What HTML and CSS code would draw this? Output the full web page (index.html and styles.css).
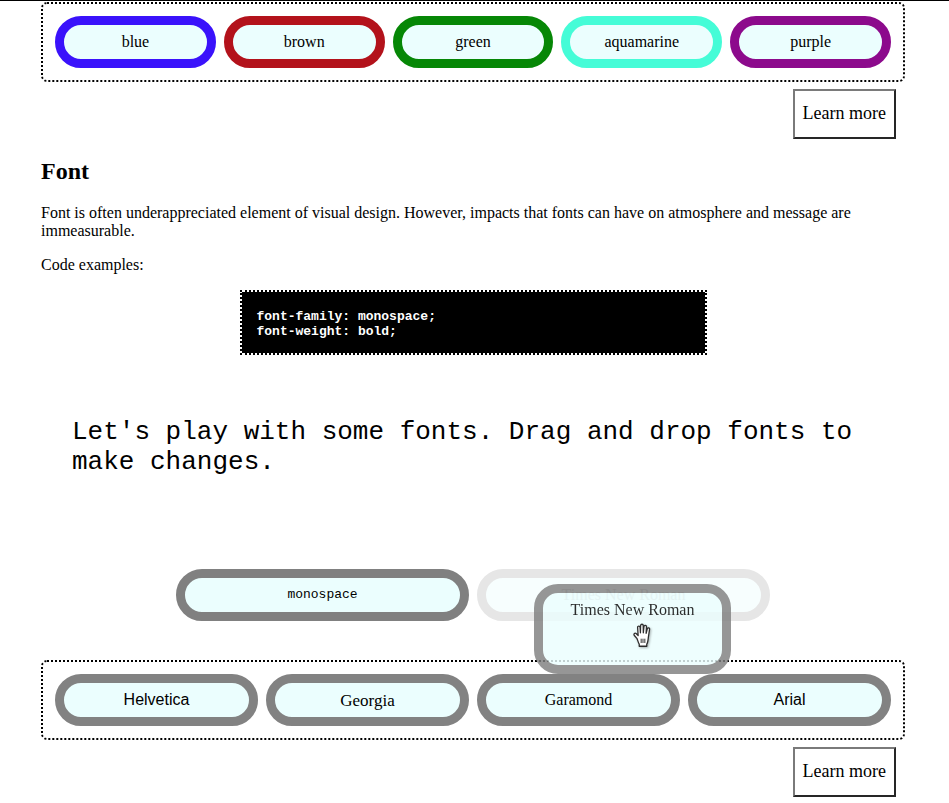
FILE: index.html
```
<!DOCTYPE html>
<html lang="en">
<head>
<meta charset="utf-8">
<title>Font</title>
<link rel="stylesheet" href="styles.css">
</head>
<body>
<div class="topline"></div>
<main class="page">
  <section class="box box-colors">
    <div class="pill c-blue">blue</div>
    <div class="pill c-brown">brown</div>
    <div class="pill c-green">green</div>
    <div class="pill c-aqua">aquamarine</div>
    <div class="pill c-purple">purple</div>
  </section>
  <div class="actions"><button class="learn">Learn more</button></div>

  <h2 class="title">Font</h2>
  <p class="text">Font is often underappreciated element of visual design. However, impacts that fonts can have on atmosphere and message are immeasurable.</p>
  <p class="text">Code examples:</p>
  <pre class="code">font-family: monospace;
font-weight: bold;</pre>

  <p class="play">Let's play with some fonts. Drag and drop fonts to make changes.</p>

  <div class="slots">
    <div class="pill slot f-mono">monospace</div>
    <div class="pill slot ghost">Times New Roman</div>
    <div class="drag">
      <span class="drag-label">Times New Roman</span>
      <svg class="hand" width="26" height="28" viewBox="0 0 24 26" aria-hidden="true">
        <path d="M6.5 15.5 L4 12.5 C3 11.3 4.3 9.8 5.6 10.7 L7.5 12.5 L7 5 C6.9 3.4 9.2 3.3 9.3 5 L9.6 10 L9.8 3.3 C9.9 1.7 12.2 1.7 12.2 3.3 L12.3 10 L12.9 4.2 C13.1 2.7 15.3 2.9 15.2 4.4 L14.9 10.5 L16 6.3 C16.4 4.9 18.4 5.3 18.1 6.8 L17 14 C16.7 17.5 16.5 19 15.5 20.5 L15.5 22.5 L8.5 22.5 L8.5 20.5 C7.6 19.3 7.2 17.3 6.5 15.5 Z" fill="#fff" stroke="#000" stroke-width="1.2" stroke-linejoin="round"/>
        <path d="M10.3 15.5 V19.5 M12 15.5 V19.5 M13.7 15.5 V19.5" stroke="#000" stroke-width="0.9"/>
      </svg>
    </div>
  </div>

  <section class="box box-fonts">
    <div class="pill neutral f-helv">Helvetica</div>
    <div class="pill neutral f-georgia">Georgia</div>
    <div class="pill neutral f-garamond">Garamond</div>
    <div class="pill neutral f-arial">Arial</div>
  </section>
  <div class="actions"><button class="learn">Learn more</button></div>
</main>
</body>
</html>
```

FILE: styles.css
```
html, body {
  margin: 0;
  padding: 0;
  background: #fff;
  color: #000;
  font-family: "Liberation Serif", "Times New Roman", serif;
}

.topline {
  height: 1px;
  background: #000;
}

.page {
  width: 864px;
  margin-left: 41px;
  padding-top: 1px;
}

.box {
  display: flex;
  gap: 8px;
  border: 2px dotted #000;
  border-radius: 6px;
  padding: 12px 12px;
}

.pill {
  flex: 1 1 0;
  height: 52px;
  box-sizing: border-box;
  border: 9px solid #808080;
  border-radius: 26px;
  background: #ebfefe;
  display: flex;
  align-items: center;
  justify-content: center;
  font-size: 16px;
  line-height: 18px;
  white-space: nowrap;
}

.c-blue { border-color: #3a12fb; }
.c-brown { border-color: #b3121b; }
.c-green { border-color: #068706; }
.c-aqua { border-color: #45fcd7; }
.c-purple { border-color: #8c0a8c; }

.neutral { border-color: #828282; }

.actions {
  display: flex;
  justify-content: flex-end;
  padding-right: 9px;
  margin-top: 7px;
}

.learn {
  font-family: "Liberation Serif", "Times New Roman", serif;
  font-size: 18px;
  line-height: 21px;
  padding: 12px 8px 13px;
  background: #fff;
  color: #000;
  border: 2px solid;
  border-color: #7a7a7a #262626 #262626 #7a7a7a;
  border-radius: 0;
}

.title {
  font-size: 24px;
  line-height: 28px;
  font-weight: bold;
  margin: 18px 0 19px 0;
}

.text {
  font-size: 16px;
  line-height: 18px;
  margin: 0 0 16px 0;
}

.code {
  width: 467px;
  box-sizing: border-box;
  margin: 1px auto 0;
  padding: 17px 15px 14px;
  background: #000;
  background-clip: padding-box;
  color: #fff;
  border: 2px dotted #000;
  font-family: "Liberation Mono", "Courier New", monospace;
  font-weight: bold;
  font-size: 13px;
  line-height: 15px;
}

.play {
  font-family: "Liberation Mono", "Courier New", monospace;
  font-size: 26px;
  line-height: 30px;
  width: 800px;
  margin: 62px 0 0 31px;
}

.slots {
  position: relative;
  display: flex;
  justify-content: center;
  gap: 8px;
  margin-top: 92px;
  margin-bottom: 39px;
}

.slot {
  flex: 0 0 293px;
}

.f-mono {
  font-family: "Liberation Mono", "Courier New", monospace;
  font-size: 13px;
}

.ghost {
  border-color: #e6e6e6;
  background: #f7fefe;
  color: #c4c4c4;
}

.drag {
  position: absolute;
  left: 493px;
  top: 15px;
  z-index: 3;
  width: 197px;
  height: 90px;
  box-sizing: border-box;
  border: 9px solid #808080;
  border-radius: 24px;
  background: #ebfefe;
  opacity: 0.82;
  display: flex;
  flex-direction: column;
  align-items: center;
  padding-top: 8px;
  font-size: 16px;
  line-height: 18px;
  color: #000;
}

.drag-label { white-space: nowrap; }

.hand {
  margin-top: 3px;
  margin-left: 20px;
  filter: drop-shadow(1px 1px 1px rgba(0,0,0,0.35));
}

.f-helv { font-family: "Liberation Sans", Arial, sans-serif; }
.f-georgia { font-family: "Liberation Serif", Georgia, serif; font-size: 17px; padding-top: 2px; }
.f-garamond { font-family: "Liberation Serif", serif; }
.f-arial { font-family: "Liberation Sans", Arial, sans-serif; }
```
